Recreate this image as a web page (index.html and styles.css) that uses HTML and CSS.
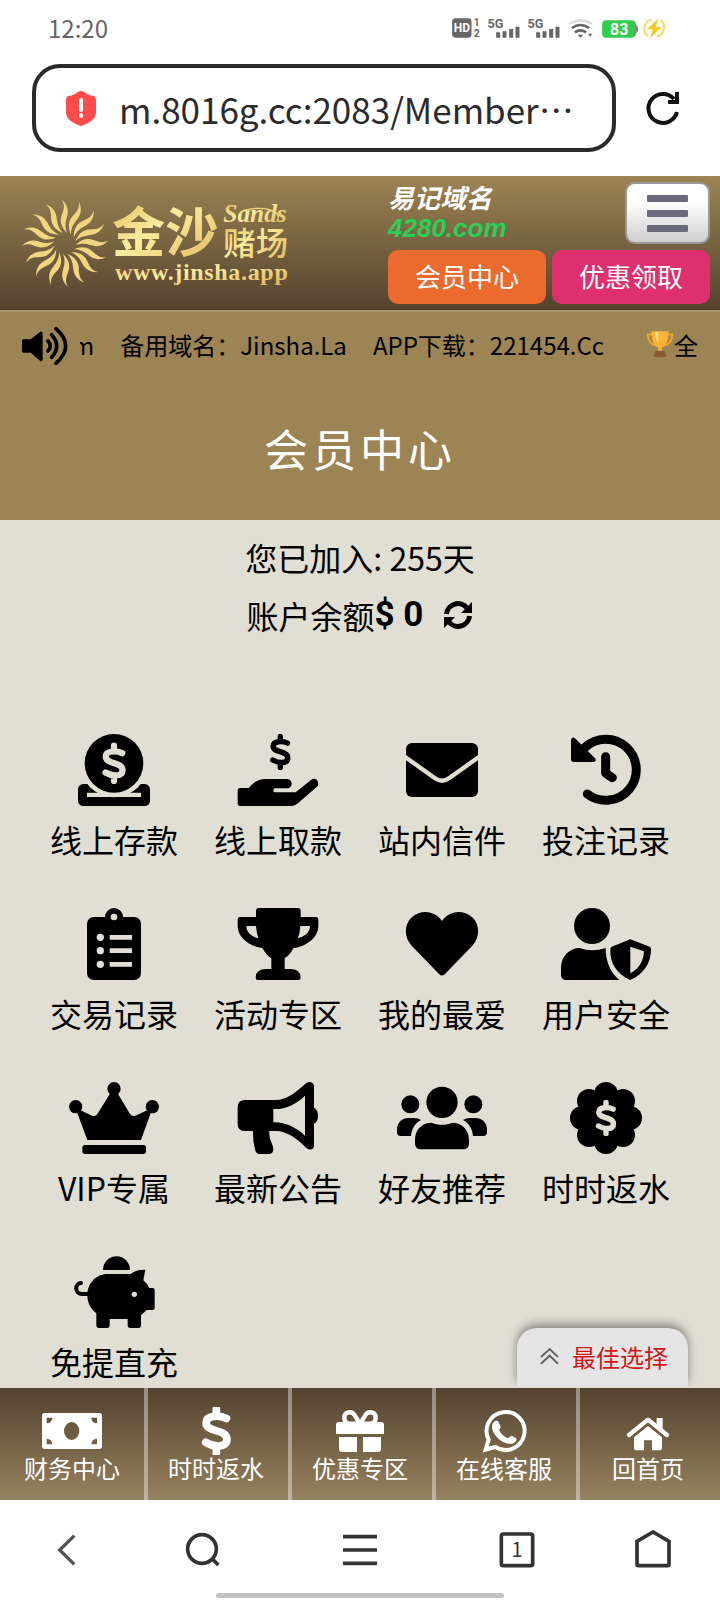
FILE: index.html
```html
<!DOCTYPE html>
<html lang="zh-CN">
<head>
    <meta charset="UTF-8">
    <meta name="viewport" content="width=device-width, initial-scale=1.0">
    <title>会员中心</title>
    <link rel="stylesheet" href="styles.css">
</head>
<body>

<!-- shared shapes -->
<svg class="defs" width="0" height="0" aria-hidden="true">
    <defs>
        <symbol id="dollar" viewBox="-42 -64 84 128">
            <path d="M25-31C8-39-25-40-25-20-25 4 26-6 26 21 26 42-6 40-26 28M0-54v16M0 38v16" fill="none" stroke="currentColor" stroke-width="19" stroke-linecap="round"/>
        </symbol>
        <linearGradient id="gold" x1="0" y1="0" x2="1" y2="1">
            <stop offset="0" stop-color="#dfb650"/>
            <stop offset="0.45" stop-color="#fbeda0"/>
            <stop offset="1" stop-color="#e0b456"/>
        </linearGradient>
        <path id="ray" d="M-9-131C9-115 12-96 5-76 0-60 0-46 6-31-7-45-15-58-12-77-8-95 4-108-9-131z"/>
    </defs>
</svg>

<div class="status-bar">
    <span>12:20</span>
    <svg class="status-icons" viewBox="60 15 650 75" fill="#666">
        <rect x="66" y="25" width="58" height="58" rx="10"/>
        <text x="95" y="67" font-size="36" text-anchor="middle" fill="#fff">HD</text>
        <text x="131" y="48" font-size="31">1</text>
        <text x="131" y="81" font-size="31">2</text>
        <text x="172" y="53" font-size="38">5G</text>
        <path d="M198 67h12v16h-12zM217 64h12v19h-12zM237 57h12v26h-12zM256 50h12v33h-12z"/>
        <text x="292" y="53" font-size="38">5G</text>
        <path d="M318 67h12v16h-12zM337 64h12v19h-12zM357 57h12v26h-12zM376 50h12v33h-12z"/>
        <g fill="none" stroke="#666" stroke-width="8">
            <path d="M417 42q34-22 68 0" stroke="#ddd"/>
            <path d="M425 54q26-18 52 0M434 67q17-12 34 0"/>
        </g>
        <path d="M442 74h17l-8 9zM474 71h12l-6 10z"/>
        <path d="M605 31q13 2 13 14 6 2 6 12t-6 12q0 12-13 14z" fill="#888"/>
        <rect x="516" y="31" width="97" height="52" rx="12" fill="#2ecf4b"/>
        <text x="567" y="74" font-size="48" text-anchor="middle" fill="#fff">83</text>
        <path d="M664 28c-24 8-28 36-12 50M680 80c24-8 28-36 12-50" fill="none" stroke="#f7d95b" stroke-width="6"/>
        <path d="M684 26l-34 32h18l-9 27 35-34h-18z" fill="#f5c81c"/>
    </svg>
</div>

<div class="address-bar">
    <div class="address-box">
        <svg class="shield" viewBox="0 0 32 36">
            <path d="M16 1q3 0 6 3 4 2 7 2 2 1 2 4v12c0 7-6 11-15 14C7 33 1 29 1 22V10q0-3 2-4 3 0 7-2 3-3 6-3z" fill="#ff4b4b"/>
            <path d="M16 10v10M16 25v1" stroke="#fff" stroke-width="4" stroke-linecap="round"/>
        </svg>
        <input type="text" class="address-input" aria-label="网址" value="m.8016g.cc:2083/Member⋯" readonly>
    </div>
    <button class="icon-button" aria-label="刷新">
        <svg viewBox="0 0 40 40" fill="none" stroke="#111" stroke-width="4">
            <path d="M34 24a14.5 14.5 0 1 1-3-13M34 4v10H25"/>
        </svg>
    </button>
</div>

<header>
    <a href="#" class="logo" aria-label="金沙赌场">
        <svg viewBox="30 24 810 300">
            <g transform="translate(165 175)" fill="#f0d680">
                <use href="#ray"/>
                <use href="#ray" transform="rotate(22.5)"/>
                <use href="#ray" transform="rotate(45)"/>
                <use href="#ray" transform="rotate(67.5)"/>
                <use href="#ray" transform="rotate(90)"/>
                <use href="#ray" transform="rotate(112.5)"/>
                <use href="#ray" transform="rotate(135)"/>
                <use href="#ray" transform="rotate(157.5)"/>
                <use href="#ray" transform="rotate(180)"/>
                <use href="#ray" transform="rotate(202.5)"/>
                <use href="#ray" transform="rotate(225)"/>
                <use href="#ray" transform="rotate(247.5)"/>
                <use href="#ray" transform="rotate(270)"/>
                <use href="#ray" transform="rotate(292.5)"/>
                <use href="#ray" transform="rotate(315)"/>
                <use href="#ray" transform="rotate(337.5)"/>
            </g>
            <g fill="url(#gold)">
                <text class="logo-name" x="306" y="200">金沙</text>
                <text class="logo-sands" x="640" y="110">Sands</text>
                <text class="logo-casino" x="640" y="210">赌场</text>
                <text class="logo-url" x="315" y="284">www.jinsha.app</text>
            </g>
            <path d="M700 76q60-14 94 4 14 8 10 20" fill="none" stroke="#f0d680" stroke-width="4"/>
        </svg>
    </a>
    <div class="header-right">
        <div class="header-top">
            <p class="domain">易记域名<br><span class="green">4280.com</span></p>
            <button class="menu-button" aria-label="菜单"><span></span><span></span><span></span></button>
        </div>
        <div class="header-buttons">
            <a href="#" class="orange">会员中心</a>
            <a href="#" class="pink">优惠领取</a>
        </div>
    </div>
</header>

<div class="notice">
    <svg class="speaker" viewBox="66 471 138 114">
        <path d="M70 508h22l29-23q7-3 7 6v76q0 9-7 6l-29-25H70q-4 0-4-6v-28q0-6 4-6z"/>
        <path d="M144 513q14 15 0 30M155 494q30 34 0 68M168 476q58 52 0 104" fill="none" stroke="#000" stroke-width="11" stroke-linecap="round"/>
    </svg>
    <div class="marquee">
        <span>m</span>
        <span>备用域名：Jinsha.La</span>
        <span>APP下载：221454.Cc</span>
        <span class="news"><svg class="cup" viewBox="856 484 86 86">
            <path d="M876 498h-14q0 28 24 34M922 498h14q0 28-24 34" fill="none" stroke="#f0a52a" stroke-width="6"/>
            <path d="M873 488h52c0 28-6 44-20 50v12H893v-12c-14-6-20-22-20-50z" fill="#f9b233"/>
            <path d="M884 490h10v34q-10-12-10-34z" fill="#ffe08a"/>
            <path d="M885 548h28l6 19h-40z" fill="#8a5a36"/>
        </svg>全</span>
    </div>
</div>

<h1>会员中心</h1>

<main>
    <div class="info">
        <p>您已加入: 255天</p>
        <p>账户余额<strong>$ 0</strong>
            <button class="refresh" aria-label="刷新余额">
                <svg viewBox="0 0 30 30">
                    <path d="M3.500 14A11.500 11.500 0 0 1 24 8M26.500 16A11.500 11.500 0 0 1 6 22" fill="none" stroke="#000" stroke-width="5"/>
                    <path d="M29 2v11H18zM1 28V17h11z"/>
                </svg>
            </button>
        </p>
    </div>

    <nav class="grid">
        <a href="#">
            <svg viewBox="117 72 270 216">
                <rect x="144" y="222" width="216" height="66" rx="16"/>
                <path class="cut" d="M171 248h162v13H171z"/>
                <circle class="cut" cx="252" cy="160" r="102"/>
                <circle cx="252" cy="160" r="88"/>
                <use href="#dollar" class="cut" x="202" y="97" width="100" height="126"/>
            </svg>
            线上存款
        </a>
        <a href="#">
            <svg viewBox="609 72 270 216">
                <path d="M630 234h26c14-16 28-27 50-27h65c9 0 14 7 14 14s-5 14-14 14h-36q-5 0-5 6t5 6h62l45-36c7-6 16-6 20 1s4 14-3 20l-57 49q-9 7-20 7H630q-7 0-7-7v-40q0-7 7-7z"/>
                <use href="#dollar" x="706" y="71" width="90" height="110"/>
            </svg>
            线上取款
        </a>
        <a href="#">
            <svg viewBox="111 72 270 216">
                <rect x="138" y="99" width="216" height="162" rx="18"/>
                <path class="cut-line" d="M130 137l94 67q22 16 44 0l94-67" stroke-width="13"/>
            </svg>
            站内信件
        </a>
        <a href="#">
            <svg viewBox="603 72 270 216">
                <path class="line" d="M673 114A91.5 91.5 0 1 1 682 252M737 140v50l20 13" stroke-width="27"/>
                <path d="M633 90q2-12 12-5l60 60q6 10-4 11h-60q-8 0-8-8z"/>
            </svg>
            投注记录
        </a>
        <a href="#">
            <svg viewBox="117 594 270 216">
                <rect x="171" y="621" width="162" height="189" rx="20"/>
                <circle cx="252" cy="621" r="27"/>
                <g class="cut">
                    <circle cx="252" cy="621" r="10"/>
                    <circle cx="211" cy="682" r="11"/>
                    <circle cx="211" cy="722" r="11"/>
                    <circle cx="211" cy="763" r="11"/>
                    <path d="M239 675h67v14h-67zM239 715h67v14h-67zM239 756h67v14h-67z"/>
                </g>
            </svg>
            交易记录
        </a>
        <a href="#">
            <svg viewBox="609 594 270 216">
                <path d="M684 594h120q8 0 8 8v19h46q7 0 7 7v20c0 36-38 62-74 66-8 14-17 25-27 31v32h16q32 0 32 26 0 7-7 7H684q-7 0-7-7 0-26 32-26h15v-32c-10-6-19-17-27-31-36-4-74-30-74-66v-20q0-7 7-7h48v-19q0-8 6-8z"/>
                <path class="cut" d="M649 648h29q1 20 7 37c-20-5-36-18-36-37zM840 648h-29q-1 20-7 37c20-5 36-18 36-37z"/>
            </svg>
            活动专区
        </a>
        <a href="#">
            <svg viewBox="111 594 270 216">
                <path d="M237 792l-82-85c-24-26-22-62-2-83 26-24 64-24 88 2l5 7 5-7c24-26 62-26 88-2 20 21 22 57-2 83l-82 85q-9 9-18 0z"/>
            </svg>
            我的最爱
        </a>
        <a href="#">
            <svg viewBox="603 594 270 216">
                <circle cx="696" cy="648" r="54"/>
                <path d="M619 810q-16 0-16-16v-20c0-36 26-60 56-60q37 14 78 0c0 40 14 74 41 96z"/>
                <path d="M811 688l58 22q4 2 4 8c0 40-20 74-62 92-42-18-62-52-60-92q0-6 4-8z"/>
                <path class="cut" d="M811 710l41 14c-1 28-14 52-41 66z"/>
            </svg>
            用户安全
        </a>
        <a href="#">
            <svg viewBox="117 66 270 216">
                <circle cx="252" cy="86" r="20"/>
                <circle cx="137" cy="140" r="20"/>
                <circle cx="367" cy="140" r="20"/>
                <path d="M242 98h20l38 64q7 9 16 5l52-24-35 97H172l-36-97 50 24q11 4 16-5z"/>
                <rect x="157" y="255" width="191" height="27" rx="8"/>
            </svg>
            VIP专属
        </a>
        <a href="#">
            <svg viewBox="609 66 270 216">
                <path d="M645 120h93c30 0 55-18 90-50 8-8 24-4 24 8v65q12 6 12 24t-12 24v66c0 14-15 14-24 6-30-30-60-50-90-50h-20c-2 28 12 40 12 54q0 14-12 15h-28q-10 0-14-10-8-28-7-59h-24q-22 0-22-22v-49q0-22 22-22z"/>
                <path class="cut" d="M730 147c36 2 68-14 95-40v120c-28-26-60-41-95-40z"/>
            </svg>
            最新公告
        </a>
        <a href="#">
            <svg viewBox="111 66 270 216">
                <circle cx="246" cy="127" r="47"/>
                <circle cx="151" cy="133" r="27"/>
                <circle cx="340" cy="133" r="27"/>
                <path d="M183 268q-18 0-18-18v-10c0-34 24-52 50-52 20 8 42 8 62 0 28 0 50 20 50 52v10q0 18-18 18z"/>
                <path d="M122 228q-11 0-11-11v-8c0-22 16-35 34-35h16q14 0 22 6c-18 10-28 26-30 48zM370 228q11 0 11-11v-8c0-22-16-35-34-35h-16q-14 0-22 6c18 10 28 26 30 48z"/>
            </svg>
            好友推荐
        </a>
        <a href="#">
            <svg viewBox="603 66 270 216">
                <circle cx="738" cy="174" r="80"/>
                <circle cx="738" cy="102" r="36"/>
                <circle cx="738" cy="246" r="36"/>
                <circle cx="666" cy="174" r="36"/>
                <circle cx="810" cy="174" r="36"/>
                <circle cx="687" cy="123" r="36"/>
                <circle cx="789" cy="123" r="36"/>
                <circle cx="687" cy="225" r="36"/>
                <circle cx="789" cy="225" r="36"/>
                <use href="#dollar" class="cut" x="693" y="119" width="90" height="110"/>
            </svg>
            时时返水
        </a>
        <a href="#">
            <svg viewBox="117 588 270 216">
                <path d="M219 630a40 41 0 0 1 81 0z"/>
                <path d="M232 642h70q16-14 44-13l-6 32q14 12 18 23h10q6 0 6 6v54q0 6-6 6h-18l-17 16v30q0 8-8 8h-24q-8 0-8-8v-19h-54v19q0 8-8 8h-24q-8 0-8-8v-36c-18-14-27-32-27-54 0-38 28-64 60-64z"/>
                <path class="line" d="M175 702h-18c-24 0-24-32-4-33" stroke-width="12"/>
                <circle class="cut" cx="313" cy="703" r="8"/>
            </svg>
            免提直充
        </a>
    </nav>
</main>

<nav class="bottom-nav">
    <a href="#" class="best">
        <svg viewBox="540 856 57 54" fill="none" stroke="#666" stroke-width="6">
            <path d="M543 886l26-24 25 24M543 906l26-24 25 24"/>
        </svg>
        最佳选择
    </a>
    <a href="#" class="tab">
        <svg viewBox="126 81 180 144">
            <path fill-rule="evenodd" d="M134 99h164q8 0 8 8v92q0 8-8 8H134q-8 0-8-8v-92q0-8 8-8zM215 126a23 27 0 1 0 0 54 23 27 0 1 0 0-54zM140 113h17q-1 16-17 17zM291 113v17q-16-1-17-17zM140 193v-17q16 1 17 17zM291 193h-17q1-16 17-17z"/>
        </svg>
        财务中心
    </a>
    <a href="#" class="tab">
        <svg viewBox="558 81 180 144">
            <use href="#dollar" x="588" y="75" width="122" height="156"/>
        </svg>
        时时返水
    </a>
    <a href="#" class="tab">
        <svg viewBox="990 81 180 144">
            <path d="M1016 126h128q8 0 8 8v28h-144v-28q0-8 8-8zM1017 171h54v45h-45q-9 0-9-9zM1089 171h54v36q0 9-9 9h-45z"/>
            <path d="M1079 131l-14-24c-10-16-32-12-32 6 0 12 6 16 14 18zM1081 131l14-24c10-16 32-12 32 6 0 12-6 16-14 18z" fill="none" stroke="#fff" stroke-width="13"/>
        </svg>
        优惠专区
    </a>
    <a href="#" class="tab">
        <svg viewBox="342 81 180 144">
            <path d="M377 209l9-30a57 57 0 1 1 20 22z" fill="none" stroke="#fff" stroke-width="12"/>
            <path d="M404 124q8-6 12 2l6 14q1 4-5 10c6 12 14 20 28 25q6-8 10-8l12 6q6 4-1 12c-10 10-26 8-42-2-16-12-28-28-28-42 0-8 2-12 8-17z"/>
        </svg>
        在线客服
    </a>
    <a href="#" class="tab">
        <svg viewBox="774 81 180 144">
            <path d="M890 114h18v36l-18-14z"/>
            <path d="M807 165l57-46 57 46" fill="none" stroke="#fff" stroke-width="13" stroke-linecap="round" stroke-linejoin="round"/>
            <path d="M822 172l42-34 42 34v32q0 7-7 7h-23v-30h-24v30h-23q-7 0-7-7z"/>
        </svg>
        回首页
    </a>
</nav>

<footer>
    <div class="browser-bar">
        <button class="icon-button" aria-label="返回">
            <svg viewBox="141 450 120 120"><path d="M223 467l-44 43 44 43" stroke="#555" stroke-width="10"/></svg>
        </button>
        <button class="icon-button" aria-label="搜索">
            <svg viewBox="549 450 120 120"><path d="M606 464a43 43 0 1 0 0 86 43 43 0 1 0 0-86zM638 538l17 17"/></svg>
        </button>
        <button class="icon-button" aria-label="菜单">
            <svg viewBox="1020 450 120 120"><path d="M1029 470h102M1029 510h102M1029 550h102"/></svg>
        </button>
        <button class="icon-button" aria-label="标签页">
            <svg viewBox="414 450 120 120"><rect x="427" y="462" width="94" height="95" rx="6"/><text x="474" y="532" font-size="60" text-anchor="middle" fill="#333" stroke="none">1</text></svg>
        </button>
        <button class="icon-button" aria-label="主页">
            <svg viewBox="819 450 120 120"><path d="M831 553v-69l48-28 48 28v69q0 4-4 4h-88q-4 0-4-4z"/></svg>
        </button>
    </div>
    <div class="handle"></div>
</footer>

</body>
</html>
```
FILE: styles.css
```css
* {
    box-sizing: border-box;
}
body {
    display: flex;
    flex-direction: column;
    min-height: 100vh;
    margin: 0;
    background-color: #fff;
    color: #000;
    font-family: "Noto Sans CJK SC", "Noto Sans", sans-serif;
    font-size: 24px;
}
a {
    color: inherit;
    text-decoration: none;
}
p, h1 {
    margin: 0;
}
button {
    padding: 0;
    border: 0;
    background: none;
    font: inherit;
    cursor: pointer;
}
svg {
    display: block;
}
.defs {
    position: absolute;
}

/* phone and browser chrome */
.status-bar {
    display: flex;
    justify-content: space-between;
    align-items: center;
    height: 56px;
    padding: 0 53px 2px 48px;
    color: #666;
}
.status-icons {
    width: 217px;
    height: 25px;
    font-family: Roboto, sans-serif;
    font-weight: bold;
}
.address-bar {
    display: flex;
    align-items: center;
    gap: 27px;
    padding: 8px 37px 24px 32px;
}
.address-box {
    display: flex;
    flex: 1;
    align-items: center;
    gap: 22px;
    min-width: 0;
    height: 88px;
    padding: 0 16px 0 29px;
    border: 4px solid #2b2b2b;
    border-radius: 28px;
}
.shield {
    flex: none;
    width: 32px;
    height: 36px;
}
.address-input {
    flex: 1;
    min-width: 0;
    padding: 0;
    border: 0;
    outline: 0;
    background: none;
    color: #2b2b2b;
    font-family: inherit;
    font-size: 35px;
}
.icon-button svg {
    width: 40px;
    height: 40px;
}

/* site header */
header {
    display: flex;
    justify-content: space-between;
    align-items: center;
    padding: 6px 10px 6px 20px;
    background-image: linear-gradient(#9c8454, #54422e);
}
.logo svg {
    width: 270px;
    height: 100px;
}
.logo-name {
    font-size: 160px;
    font-weight: bold;
}
.logo-sands {
    font-family: "Liberation Serif", serif;
    font-size: 76px;
    font-style: italic;
    font-weight: bold;
}
.logo-casino {
    font-size: 97px;
    font-weight: 500;
}
.logo-url {
    font-family: "Liberation Serif", serif;
    font-size: 72px;
    font-weight: bold;
    letter-spacing: 2px;
}
.header-right {
    display: flex;
    flex-direction: column;
    gap: 6px;
    width: 322px;
}
.header-top {
    display: flex;
    justify-content: space-between;
}
.domain {
    color: #fff;
    font-size: 26px;
    font-style: italic;
    font-weight: bold;
    line-height: 29px;
}
.green {
    color: #2bce56;
    font-family: "Liberation Sans", sans-serif;
}
.menu-button {
    display: flex;
    flex-direction: column;
    justify-content: center;
    align-items: center;
    gap: 8px;
    width: 85px;
    height: 62px;
    border: 2px solid #999;
    border-radius: 10px;
    background-image: linear-gradient(#fff 30%, #cfcfcf);
}
.menu-button span {
    width: 41px;
    height: 7px;
    border-radius: 1px;
    background-color: #6a6a7b;
}
.header-buttons {
    display: flex;
    gap: 6px;
}
.header-buttons a {
    flex: 1;
    padding-bottom: 2px;
    border-radius: 10px;
    color: #fff;
    font-size: 26px;
    line-height: 52px;
    text-align: center;
}
.orange {
    background-color: #eb6a2d;
}
.pink {
    background-color: #de2f6f;
}

/* scrolling notice */
.notice {
    display: flex;
    align-items: center;
    gap: 12px;
    height: 70px;
    padding: 0 22px;
    border-top: 2px solid #a8946c;
    background-color: #9c8454;
}
.speaker {
    flex: none;
    width: 46px;
    height: 38px;
}
.marquee {
    display: flex;
    flex: 1;
    justify-content: flex-end;
    gap: 26px;
    overflow: hidden;
    padding-bottom: 4px;
    white-space: nowrap;
}
.news {
    display: flex;
    align-items: center;
    margin-left: 16px;
}
.cup {
    width: 28px;
    height: 28px;
}
h1 {
    padding-bottom: 4px;
    background-color: #9c8454;
    color: #fff;
    font-size: 44px;
    font-weight: normal;
    letter-spacing: 4px;
    line-height: 136px;
    text-align: center;
}

/* member page */
main {
    flex: 1;
    background-color: #e1dfd4;
}
.info {
    padding-top: 8px;
    font-size: 32px;
    line-height: 58px;
    text-align: center;
}
.info p {
    display: flex;
    justify-content: center;
    align-items: center;
}
.info strong {
    font-family: Roboto, sans-serif;
    font-size: 35px;
}
.refresh {
    margin-left: 20px;
}
.refresh svg {
    width: 30px;
    height: 30px;
}
.grid {
    display: grid;
    grid-template-columns: repeat(4, 1fr);
    row-gap: 46px;
    padding: 90px 32px 0;
}
.grid a {
    display: flex;
    flex-direction: column;
    align-items: center;
    gap: 10px;
    font-size: 32px;
    line-height: 46px;
    white-space: nowrap;
}
.grid svg {
    width: 90px;
    height: 72px;
}
.cut {
    fill: #e1dfd4;
    color: #e1dfd4;
}
.cut-line {
    fill: none;
    stroke: #e1dfd4;
}
.line {
    fill: none;
    stroke: #000;
    stroke-linecap: round;
    stroke-linejoin: round;
}

/* bottom navigation */
.bottom-nav {
    position: relative;
    display: flex;
    background-image: linear-gradient(#54422e, #97825f);
}
.tab {
    display: flex;
    flex: 1;
    flex-direction: column;
    align-items: center;
    padding: 19px 0;
    color: #fff;
    line-height: 26px;
}
.tab + .tab {
    box-shadow: inset 4px 0 rgba(255, 255, 255, 0.4);
}
.tab svg {
    width: 60px;
    height: 48px;
    fill: #fff;
}
.best {
    position: absolute;
    right: 32px;
    bottom: 100%;
    display: flex;
    align-items: center;
    gap: 13px;
    height: 58px;
    margin-bottom: 2px;
    padding: 0 20px 2px 23px;
    border-radius: 20px 20px 0 0;
    background-color: #e5e5e5;
    box-shadow: 0 -4px 10px rgba(0, 0, 0, 0.4);
    clip-path: inset(-20px -20px 0);
    color: #d01818;
}
.best svg {
    width: 19px;
    height: 18px;
}
.browser-bar {
    display: grid;
    grid-template-columns: 134fr 138fr 176fr 138fr 134fr;
    justify-items: center;
    padding: 30px 0 23px;
}
.browser-bar svg {
    fill: none;
    stroke: #333;
    stroke-width: 11;
}
.handle {
    width: 40%;
    height: 5px;
    margin: 0 auto 2px;
    border-radius: 3px;
    background-color: #c2c2c2;
}
```
